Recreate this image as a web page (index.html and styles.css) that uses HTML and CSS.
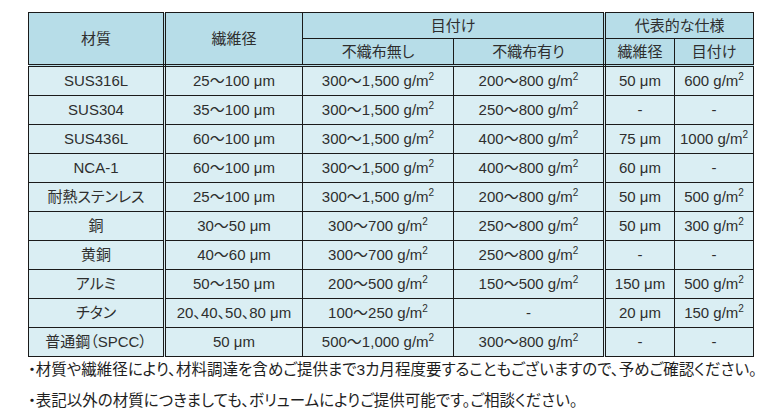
FILE: index.html
```html
<!DOCTYPE html>
<html lang="ja">
<head>
<meta charset="utf-8">
<title>材質一覧</title>
<link rel="stylesheet" href="styles.css">
</head>
<body>
<div class="page">
  <table class="spec">
    <colgroup>
      <col class="c1"><col class="c2"><col class="c3"><col class="c4"><col class="c5"><col class="c6">
    </colgroup>
    <thead>
      <tr>
        <th rowspan="2" class="dr db">材質</th>
        <th rowspan="2" class="db">繊維径</th>
        <th colspan="2" class="dr">目付け</th>
        <th colspan="2">代表的な仕様</th>
      </tr>
      <tr>
        <th class="db">不織布無し</th>
        <th class="db dr">不織布有り</th>
        <th class="db">繊維径</th>
        <th class="db">目付け</th>
      </tr>
    </thead>
    <tbody>
      <tr><td class="dr">SUS316L</td><td>25～100 μm</td><td>300～1,500 g/m<sup>2</sup></td><td class="dr">200～800 g/m<sup>2</sup></td><td>50 μm</td><td>600 g/m<sup>2</sup></td></tr>
      <tr><td class="dr">SUS304</td><td>35～100 μm</td><td>300～1,500 g/m<sup>2</sup></td><td class="dr">250～800 g/m<sup>2</sup></td><td>-</td><td>-</td></tr>
      <tr><td class="dr">SUS436L</td><td>60～100 μm</td><td>300～1,500 g/m<sup>2</sup></td><td class="dr">400～800 g/m<sup>2</sup></td><td>75 μm</td><td>1000 g/m<sup>2</sup></td></tr>
      <tr><td class="dr">NCA-1</td><td>60～100 μm</td><td>300～1,500 g/m<sup>2</sup></td><td class="dr">400～800 g/m<sup>2</sup></td><td>60 μm</td><td>-</td></tr>
      <tr><td class="dr">耐熱ステンレス</td><td>25～100 μm</td><td>300～1,500 g/m<sup>2</sup></td><td class="dr">200～800 g/m<sup>2</sup></td><td>50 μm</td><td>500 g/m<sup>2</sup></td></tr>
      <tr><td class="dr">銅</td><td>30～50 μm</td><td>300～700 g/m<sup>2</sup></td><td class="dr">250～800 g/m<sup>2</sup></td><td>50 μm</td><td>300 g/m<sup>2</sup></td></tr>
      <tr><td class="dr">黄銅</td><td>40～60 μm</td><td>300～700 g/m<sup>2</sup></td><td class="dr">250～800 g/m<sup>2</sup></td><td>-</td><td>-</td></tr>
      <tr><td class="dr">アルミ</td><td>50～150 μm</td><td>200～500 g/m<sup>2</sup></td><td class="dr">150～500 g/m<sup>2</sup></td><td>150 μm</td><td>500 g/m<sup>2</sup></td></tr>
      <tr><td class="dr">チタン</td><td>20、40、50、80 μm</td><td>100～250 g/m<sup>2</sup></td><td class="dr">-</td><td>20 μm</td><td>150 g/m<sup>2</sup></td></tr>
      <tr><td class="dr">普通鋼（SPCC）</td><td>50 μm</td><td>500～1,000 g/m<sup>2</sup></td><td class="dr">300～800 g/m<sup>2</sup></td><td>-</td><td>-</td></tr>
    </tbody>
  </table>
  <p class="note">・材質や繊維径により、材料調達を含めご提供まで3カ月程度要することもございますので、予めご確認ください。</p>
  <p class="note">・表記以外の材質につきましても、ボリュームによりご提供可能です。ご相談ください。</p>
</div>
</body>
</html>
```

FILE: styles.css
```css
html, body {
  margin: 0;
  background: #ffffff;
}

body {
  font-family: "Liberation Sans", "Noto Sans CJK JP", sans-serif;
  font-feature-settings: "palt";
  color: #2e2e2e;
}

.page {
  padding: 12px 0 0 28px;
}

.spec {
  border-collapse: collapse;
  table-layout: fixed;
  width: 725px;
  font-size: 15px;
}

.c1 { width: 136px; }
.c2 { width: 138px; }
.c3 { width: 151px; }
.c4 { width: 151px; }
.c5 { width: 70px; }
.c6 { width: 79px; }

.spec th,
.spec td {
  border: 1px solid #1a1a1a;
  text-align: center;
  padding: 0;
  font-weight: normal;
  white-space: nowrap;
  line-height: 18px;
}

.spec th {
  background: #b7dde8;
  height: 25px;
}

.spec td {
  background: #daeef3;
  height: 28px;
}

.spec .dr {
  border-right: 3px double #1a1a1a;
}

.spec .db {
  border-bottom: 3px double #1a1a1a;
}

.spec sup {
  font-size: 10px;
  line-height: 0;
  vertical-align: 6px;
}

.note {
  margin: 0;
  font-size: 15.5px;
  line-height: 31px;
  white-space: nowrap;
  color: #1e1e1e;
}

.spec + .note {
  margin-top: -3px;
}
```
